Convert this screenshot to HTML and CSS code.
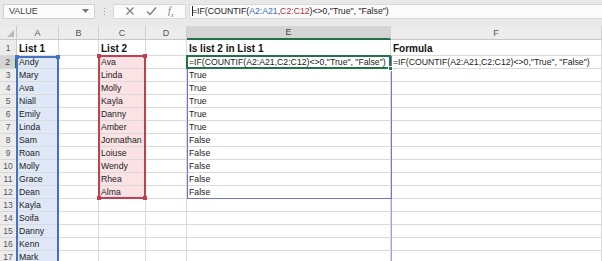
FILE: index.html
```html
<!DOCTYPE html>
<html lang="en">
<head>
    <meta charset="UTF-8">
    <meta name="viewport" content="width=device-width, initial-scale=1.0">
    <title>Is list 2 in List 1</title>
    <link rel="stylesheet" href="styles.css">
</head>
<body>

    <div class="formula-bar">
        <div class="name-box">
            <span>VALUE</span>
            <svg class="drop" width="7" height="4" viewBox="0 0 7 4"><path d="M0 0h7L3.5 4z" fill="#777"/></svg>
        </div>
        <div class="grip">
            <i></i><i></i><i></i>
        </div>
        <div class="fx-buttons">
            <svg width="10" height="10" viewBox="0 0 10 10"><path d="M1.5 1.5l7 7M8.5 1.5l-7 7" stroke="#7a7a7a" stroke-width="1.2" fill="none"/></svg>
            <svg width="11" height="10" viewBox="0 0 11 10"><path d="M1 5.5l3 3L10 1.5" stroke="#7a7a7a" stroke-width="1.3" fill="none"/></svg>
            <span class="fx">f<sub>x</sub></span>
        </div>
        <div class="formula-input">
            <span class="cursor"></span>
            <span class="formula-text">=IF(COUNTIF(<span class="ref-a">A2:A21</span>,<span class="ref-c">C2:C12</span>)&lt;&gt;0,"True", "False")</span>
        </div>
    </div>

    <div class="sheet">
        <div class="cells">
            <div class="corner"><svg width="7" height="7" viewBox="0 0 7 7"><path d="M7 0v7H0z" fill="#b9b9b9"/></svg></div>
            <div class="col-head">A</div>
            <div class="col-head">B</div>
            <div class="col-head">C</div>
            <div class="col-head">D</div>
            <div class="col-head active">E</div>
            <div class="col-head">F</div>

            <div class="row-head">1</div>
            <div class="cell title">List 1</div>
            <div class="cell"></div>
            <div class="cell title">List 2</div>
            <div class="cell"></div>
            <div class="cell title">Is list 2 in List 1</div>
            <div class="cell title">Formula</div>

            <div class="row-head active">2</div>
            <div class="cell in-a">Andy</div>
            <div class="cell"></div>
            <div class="cell in-c">Ava</div>
            <div class="cell"></div>
            <div class="cell">=IF(COUNTIF(A2:A21,C2:C12)&lt;&gt;0,"True", "False")</div>
            <div class="cell">=IF(COUNTIF(A2:A21,C2:C12)&lt;&gt;0,"True", "False")</div>

            <div class="row-head">3</div>
            <div class="cell in-a">Mary</div>
            <div class="cell"></div>
            <div class="cell in-c">Linda</div>
            <div class="cell"></div>
            <div class="cell">True</div>
            <div class="cell"></div>

            <div class="row-head">4</div>
            <div class="cell in-a">Ava</div>
            <div class="cell"></div>
            <div class="cell in-c">Molly</div>
            <div class="cell"></div>
            <div class="cell">True</div>
            <div class="cell"></div>

            <div class="row-head">5</div>
            <div class="cell in-a">Niall</div>
            <div class="cell"></div>
            <div class="cell in-c">Kayla</div>
            <div class="cell"></div>
            <div class="cell">True</div>
            <div class="cell"></div>

            <div class="row-head">6</div>
            <div class="cell in-a">Emily</div>
            <div class="cell"></div>
            <div class="cell in-c">Danny</div>
            <div class="cell"></div>
            <div class="cell">True</div>
            <div class="cell"></div>

            <div class="row-head">7</div>
            <div class="cell in-a">Linda</div>
            <div class="cell"></div>
            <div class="cell in-c">Amber</div>
            <div class="cell"></div>
            <div class="cell">True</div>
            <div class="cell"></div>

            <div class="row-head">8</div>
            <div class="cell in-a">Sam</div>
            <div class="cell"></div>
            <div class="cell in-c">Jonnathan</div>
            <div class="cell"></div>
            <div class="cell">False</div>
            <div class="cell"></div>

            <div class="row-head">9</div>
            <div class="cell in-a">Roan</div>
            <div class="cell"></div>
            <div class="cell in-c">Loiuse</div>
            <div class="cell"></div>
            <div class="cell">False</div>
            <div class="cell"></div>

            <div class="row-head">10</div>
            <div class="cell in-a">Molly</div>
            <div class="cell"></div>
            <div class="cell in-c">Wendy</div>
            <div class="cell"></div>
            <div class="cell">False</div>
            <div class="cell"></div>

            <div class="row-head">11</div>
            <div class="cell in-a">Grace</div>
            <div class="cell"></div>
            <div class="cell in-c">Rhea</div>
            <div class="cell"></div>
            <div class="cell">False</div>
            <div class="cell"></div>

            <div class="row-head">12</div>
            <div class="cell in-a">Dean</div>
            <div class="cell"></div>
            <div class="cell in-c">Alma</div>
            <div class="cell"></div>
            <div class="cell">False</div>
            <div class="cell"></div>

            <div class="row-head">13</div>
            <div class="cell in-a">Kayla</div>
            <div class="cell"></div><div class="cell"></div><div class="cell"></div><div class="cell"></div><div class="cell"></div>

            <div class="row-head">14</div>
            <div class="cell in-a">Soifa</div>
            <div class="cell"></div><div class="cell"></div><div class="cell"></div><div class="cell"></div><div class="cell"></div>

            <div class="row-head">15</div>
            <div class="cell in-a">Danny</div>
            <div class="cell"></div><div class="cell"></div><div class="cell"></div><div class="cell"></div><div class="cell"></div>

            <div class="row-head">16</div>
            <div class="cell in-a">Kenn</div>
            <div class="cell"></div><div class="cell"></div><div class="cell"></div><div class="cell"></div><div class="cell"></div>

            <div class="row-head">17</div>
            <div class="cell in-a">Mark</div>
            <div class="cell"></div><div class="cell"></div><div class="cell"></div><div class="cell"></div><div class="cell"></div>
        </div>

        <!-- range highlights drawn over the grid -->
        <div class="ranges">
            <div class="range range-a"><b class="h tl"></b><b class="h tr"></b></div>
            <div class="range range-c"><b class="h tl"></b><b class="h tr"></b><b class="h bl"></b><b class="h br"></b></div>
            <div class="range range-e"></div>
            <div class="range range-e-edge"></div>
            <div class="range active-cell"><b class="fill-handle"></b></div>
        </div>
    </div>

</body>
</html>
```

FILE: styles.css
```css
* {
    box-sizing: border-box;
}
body {
    margin: 0;
    width: 602px;
    height: 261px;
    overflow: hidden;
    background-color: #ffffff;
    font-family: "Liberation Sans", Arial, sans-serif;
    color: #222222;
}

/* formula bar */
.formula-bar {
    display: flex;
    align-items: center;
    height: 26px;
    padding: 0 0 4px 3px;
    background-color: #e9e9e9;
}
.name-box {
    display: flex;
    align-items: center;
    justify-content: space-between;
    width: 92px;
    height: 15px;
    padding: 0 5px 0 5px;
    background-color: #fbfbfb;
    border: 1px solid #cfcfcf;
    font-size: 9px;
    color: #444444;
}
.grip {
    display: flex;
    flex-direction: column;
    gap: 2px;
    width: 18px;
    align-items: center;
}
.grip i {
    width: 1px;
    height: 1px;
    background-color: #a0a0a0;
}
.fx-buttons {
    display: flex;
    align-items: center;
    justify-content: space-around;
    width: 73px;
    height: 15px;
    padding: 0 6px;
    background-color: #fbfbfb;
    border: 1px solid #d8d8d8;
}
.fx {
    font-family: "Liberation Serif", serif;
    font-style: italic;
    font-size: 10px;
    color: #7a7a7a;
}
.fx sub {
    font-size: 6px;
}
.formula-input {
    flex: 1;
    display: flex;
    align-items: center;
    height: 15px;
    margin-left: 3px;
    padding-left: 2px;
    background-color: #fbfbfb;
    border: 1px solid #d8d8d8;
    border-right: none;
    overflow: hidden;
}
.formula-text {
    font-size: 8.7px;
    white-space: nowrap;
    color: #222222;
}
.cursor {
    flex: none;
    width: 1px;
    height: 10px;
    margin-right: -1px;
    background-color: #222222;
}
.ref-a {
    color: #3d6bc4;
}
.ref-c {
    color: #b8323f;
}

/* sheet */
.sheet {
    display: grid;
}
.cells,
.ranges {
    grid-area: 1 / 1;
    display: grid;
    grid-template-columns: 17px 42px 40px 47px 41px 204px 211px;
    grid-template-rows: 14px 16px repeat(16, 13px);
}
.corner {
    display: flex;
    align-items: flex-end;
    justify-content: flex-end;
    padding: 0 2px 2px 0;
    background-color: #ececec;
    border-right: 1px solid #c8c8c8;
    border-bottom: 1px solid #c8c8c8;
}
.col-head {
    display: flex;
    align-items: center;
    justify-content: center;
    background-color: #ececec;
    border-right: 1px solid #cfcfcf;
    border-bottom: 1px solid #c8c8c8;
    font-size: 9px;
    color: #555555;
}
.col-head.active {
    background-color: #d4d4d4;
    border-bottom: 2px solid #217346;
    color: #444444;
}
.row-head {
    display: flex;
    align-items: center;
    justify-content: center;
    background-color: #ececec;
    border-right: 1px solid #c8c8c8;
    border-bottom: 1px solid #d8d8d8;
    font-size: 8.5px;
    color: #555555;
}
.row-head.active {
    background-color: #d4d4d4;
    border-right: 2px solid #217346;
    color: #444444;
}
.cell {
    padding: 1px 0 0 2px;
    border-right: 1px solid #dadada;
    border-bottom: 1px solid #dadada;
    font-size: 8.7px;
    line-height: 11px;
    white-space: nowrap;
    overflow: visible;
}
.cell.title {
    padding-top: 2px;
    font-size: 10px;
    font-weight: bold;
    line-height: 13px;
    color: #111111;
}
.cell.in-a {
    background-color: #dfe8f6;
}
.cell.in-c {
    background-color: #fbe3e5;
}

/* highlight overlays */
.range {
    position: relative;
    pointer-events: none;
}
.range-a {
    grid-column: 2;
    grid-row: 3 / 19;
    margin-left: -1px;
    border: 2px solid #4472c4;
    border-bottom: none;
}
.range-c {
    grid-column: 4;
    grid-row: 3 / 14;
    margin: -1px 0 0 -1px;
    border: 2px solid #c0404f;
}
.range-e {
    grid-column: 6;
    grid-row: 3 / 14;
    margin: 0 -1px 0 0;
    border: 1px solid #7077c9;
}
.range-e-edge {
    grid-column: 6;
    grid-row: 14 / 19;
    margin-right: -1px;
    border-right: 1px solid #9ea3dc;
}
.active-cell {
    grid-column: 6;
    grid-row: 3;
    margin: -1px 0 0 -1px;
    border: 2px solid #217346;
}
.h {
    position: absolute;
    width: 4px;
    height: 4px;
}
.range-a .h {
    background-color: #4472c4;
}
.range-c .h {
    background-color: #c0404f;
}
.tl { top: -3px; left: -3px; }
.tr { top: -3px; right: -3px; }
.bl { bottom: -3px; left: -3px; }
.br { bottom: -3px; right: -3px; }
.fill-handle {
    position: absolute;
    right: -4px;
    bottom: -4px;
    width: 5px;
    height: 5px;
    background-color: #217346;
    border: 1px solid #ffffff;
}
```
